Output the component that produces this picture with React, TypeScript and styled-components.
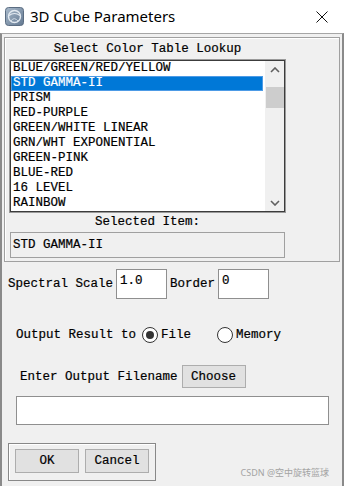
import styled, { createGlobalStyle } from 'styled-components'

const GlobalStyle = createGlobalStyle`
  html, body {
    margin: 0;
    padding: 0;
    background: #f0f0f0;
  }
  body {
    width: 344px;
    height: 486px;
    overflow: hidden;
  }
  * { box-sizing: border-box; }
`

const mono = `"Liberation Mono", "DejaVu Sans Mono", monospace`

const Window = styled.div`
  width: 344px;
  height: 486px;
  display: flex;
  flex-direction: column;
  background: #f0f0f0;
  font-family: ${mono};
  font-size: 12.5px;
  color: #000;
  -webkit-text-stroke: 0.2px currentColor;
`

const TitleBar = styled.div`
  height: 33px;
  flex: none;
  background: #fff;
  display: flex;
  align-items: center;
  padding: 0 16px 0 5px;
  font-family: "Noto Sans", "Liberation Sans", sans-serif;
  font-size: 15px;
  -webkit-text-stroke: 0;
  > .title {
    margin-left: 6px;
    margin-top: -1px;
  }
  > .close {
    margin-left: auto;
    display: flex;
  }
`

const Client = styled.div`
  flex: 1;
  display: flex;
  flex-direction: column;
  border-top: 1px solid #a6a6a6;
  border-left: 2px solid #8a8a8a;
  border-right: 2px solid #8a8a8a;
`

const Panel = styled.div`
  width: 336px;
  height: 225px;
  margin: 3px 0 0 2px;
  padding: 0 0 0 5px;
  border: 1px solid #a0a0a0;
  box-shadow: inset 1px 1px 0 #fff;
  display: flex;
  flex-direction: column;
`

const Caption = styled.div<{ $h: number }>`
  width: 275px;
  height: ${p => p.$h}px;
  display: flex;
  align-items: center;
  justify-content: center;
  white-space: pre;
`

const ListBox = styled.div`
  width: 275px;
  height: 152px;
  background: #fff;
  border: 1px solid #3c3c3c;
  box-shadow: 0 0 0 1px #9a9a9a;
  display: flex;
`

const Rows = styled.div`
  flex: 1;
  display: flex;
  flex-direction: column;
  padding-right: 2px;
`

const Row = styled.div<{ $sel?: boolean }>`
  height: 15px;
  line-height: 15px;
  padding-left: 2px;
  white-space: pre;
  background: ${p => (p.$sel ? '#0078d7' : 'transparent')};
  color: ${p => (p.$sel ? '#fff' : '#000')};
  box-shadow: ${p => (p.$sel ? 'inset 0 0 0 1px #4d9be6' : 'none')};
`

const ScrollBar = styled.div`
  width: 19px;
  background: #f0f0f0;
  display: flex;
  flex-direction: column;
  align-items: center;
  > .arrow {
    height: 17px;
    width: 19px;
    display: flex;
    align-items: center;
    justify-content: center;
  }
  > .thumb {
    margin-top: 9px;
    width: 18px;
    height: 21px;
    background: #cdcdcd;
  }
  > .spacer {
    flex: 1;
  }
`

const ReadField = styled.div`
  width: 275px;
  height: 26px;
  border: 1px solid #a0a0a0;
  background: #f0f0f0;
  display: flex;
  align-items: center;
  padding-left: 2px;
  white-space: pre;
`

const FormRow = styled.div<{ $top: number; $left: number }>`
  display: flex;
  align-items: center;
  margin-top: ${p => p.$top}px;
  margin-left: ${p => p.$left}px;
  white-space: pre;
`

const TextBox = styled.div<{ $w: number; $h: number }>`
  width: ${p => p.$w}px;
  height: ${p => p.$h}px;
  background: #fff;
  border: 1px solid #8f8f8f;
  padding: 4px 3px;
  line-height: 15px;
  white-space: pre;
`

const Gap = styled.span<{ $w: number }>`
  display: inline-block;
  width: ${p => p.$w}px;
`

const Radio = styled.span<{ $on?: boolean }>`
  width: 16px;
  height: 16px;
  border-radius: 50%;
  border: 1px solid #333;
  background: #fff;
  display: inline-flex;
  align-items: center;
  justify-content: center;
  &::after {
    content: "";
    width: 8px;
    height: 8px;
    border-radius: 50%;
    background: ${p => (p.$on ? '#333' : 'transparent')};
  }
`

const Button = styled.div<{ $w: number; $h: number }>`
  width: ${p => p.$w}px;
  height: ${p => p.$h}px;
  background: #e1e1e1;
  border: 1px solid #adadad;
  display: flex;
  align-items: center;
  justify-content: center;
  white-space: pre;
`

const Footer = styled.div`
  display: flex;
  align-items: flex-end;
  margin: 18px 13px 0 6px;
`

const ButtonGroup = styled.div`
  width: 148px;
  height: 38px;
  border: 1px solid #888;
  box-shadow: inset 1px 1px 0 #fff;
  display: flex;
  gap: 6px;
  padding: 5px 0 0 6px;
`

const Watermark = styled.div`
  margin-left: auto;
  margin-bottom: 2px;
  font-family: "Noto Sans", "Noto Sans CJK SC", sans-serif;
  font-size: 9px;
  color: #a3a3a3;
  white-space: pre;
  -webkit-text-stroke: 0;
`

const items = [
  'BLUE/GREEN/RED/YELLOW',
  'STD GAMMA-II',
  'PRISM',
  'RED-PURPLE',
  'GREEN/WHITE LINEAR',
  'GRN/WHT EXPONENTIAL',
  'GREEN-PINK',
  'BLUE-RED',
  '16 LEVEL',
  'RAINBOW',
]

function AppIcon() {
  return (
    <svg width="19" height="19" viewBox="0 0 19 19">
      <defs>
        <linearGradient id="ig" x1="0" y1="0" x2="1" y2="1">
          <stop offset="0" stopColor="#a9bacb" />
          <stop offset="1" stopColor="#637891" />
        </linearGradient>
      </defs>
      <rect x="0.5" y="0.5" width="18" height="18" rx="3" fill="url(#ig)" stroke="#5b6d82" />
      <circle cx="9.5" cy="9.5" r="6" fill="none" stroke="#e3eaf1" strokeWidth="1.4" />
      <path d="M4 8.5 Q9.5 4.5 15 8.5" fill="none" stroke="#e3eaf1" strokeWidth="1.1" />
      <path d="M6 14 Q9 9 13.5 14.5" fill="none" stroke="#cdd8e3" strokeWidth="1" />
    </svg>
  )
}

function Chevron({ up }: { up?: boolean }) {
  return (
    <svg width="10" height="6" viewBox="0 0 10 6">
      <polyline
        points={up ? '1,5 5,1 9,5' : '1,1 5,5 9,1'}
        fill="none"
        stroke="#606060"
        strokeWidth="1.6"
      />
    </svg>
  )
}

export default function App() {
  return (
    <>
      <GlobalStyle />
      <Window>
        <TitleBar>
          <AppIcon />
          <span className="title">3D Cube Parameters</span>
          <span className="close">
            <svg width="12" height="12" viewBox="0 0 12 12">
              <path d="M0.5 0.5 L11.5 11.5 M11.5 0.5 L0.5 11.5" stroke="#111" strokeWidth="1" />
            </svg>
          </span>
        </TitleBar>
        <Client>
          <Panel>
            <Caption $h={22}>Select Color Table Lookup</Caption>
            <ListBox>
              <Rows>
                {items.map((it, i) => (
                  <Row key={it} $sel={i === 1}>
                    {it}
                  </Row>
                ))}
              </Rows>
              <ScrollBar>
                <div className="arrow">
                  <Chevron up />
                </div>
                <div className="thumb" />
                <div className="spacer" />
                <div className="arrow">
                  <Chevron />
                </div>
              </ScrollBar>
            </ListBox>
            <Caption $h={20}>Selected Item:</Caption>
            <ReadField>STD GAMMA-II</ReadField>
          </Panel>

          <FormRow $top={7} $left={6}>
            Spectral Scale<Gap $w={3} />
            <TextBox $w={51} $h={30}>1.0</TextBox>
            <Gap $w={3} />Border<Gap $w={3} />
            <TextBox $w={51} $h={30}>0</TextBox>
          </FormRow>

          <FormRow $top={28} $left={14}>
            Output Result to<Gap $w={6} />
            <Radio $on />
            <Gap $w={3} />File<Gap $w={26} />
            <Radio />
            <Gap $w={3} />Memory
          </FormRow>

          <FormRow $top={22} $left={18}>
            Enter Output Filename<Gap $w={4} />
            <Button $w={64} $h={23}>Choose</Button>
          </FormRow>

          <FormRow $top={8} $left={14}>
            <TextBox $w={313} $h={29} />
          </FormRow>

          <Footer>
            <ButtonGroup>
              <Button $w={64} $h={24}>OK</Button>
              <Button $w={64} $h={24}>Cancel</Button>
            </ButtonGroup>
            <Watermark>CSDN @空中旋转篮球</Watermark>
          </Footer>
        </Client>
      </Window>
    </>
  )
}
